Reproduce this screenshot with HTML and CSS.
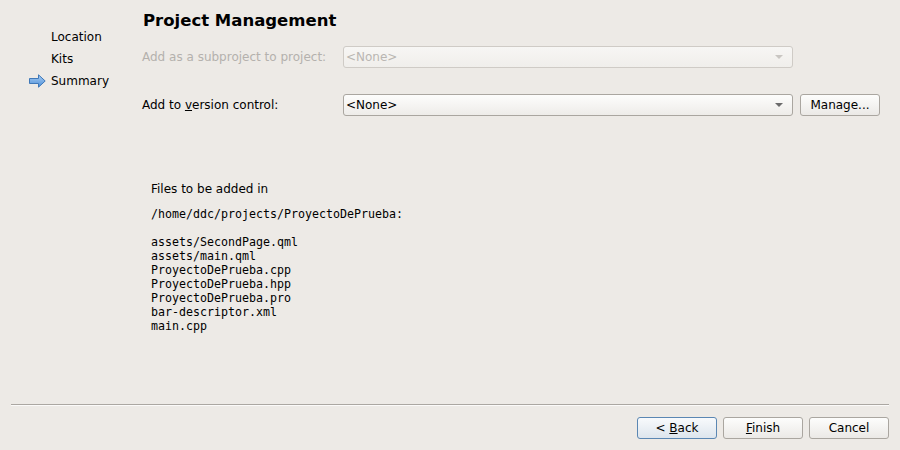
FILE: index.html
```html
<!DOCTYPE html>
<html>
<head>
<meta charset="utf-8">
<link rel="stylesheet" href="styles.css">
</head>
<body>
<div class="wizard">
  <div class="content">
    <ul class="steps">
      <li class="step"><span class="slot"></span>Location</li>
      <li class="step"><span class="slot"></span>Kits</li>
      <li class="step current"><span class="slot"><svg width="17" height="14" viewBox="0 0 17 14"><defs><linearGradient id="ag" x1="0" y1="0" x2="0" y2="1"><stop offset="0" stop-color="#a9cdf3"/><stop offset="1" stop-color="#4d8fd8"/></linearGradient></defs><path d="M0.5 4.5 H9.5 V0.8 L16.2 7 L9.5 13.2 V9.5 H0.5 Z" fill="url(#ag)" stroke="#3f78b8" stroke-width="1" stroke-linejoin="round"/></svg></span>Summary</li>
    </ul>
    <div class="main">
      <h1 class="title">Project Management</h1>
      <div class="form">
        <label class="label disabled">Add as a subproject to project:</label>
        <div class="combo disabled"><span>&lt;None&gt;</span><span class="caret"></span></div>
        <span></span>
        <label class="label row2">Add to <u>v</u>ersion control:</label>
        <div class="combo row2"><span>&lt;None&gt;</span><span class="caret"></span></div>
        <button class="btn row2">Manage...</button>
      </div>
      <div class="files">
        <p class="files-head">Files to be added in</p>
        <pre class="files-list">/home/ddc/projects/ProyectoDePrueba:

assets/SecondPage.qml
assets/main.qml
ProyectoDePrueba.cpp
ProyectoDePrueba.hpp
ProyectoDePrueba.pro
bar-descriptor.xml
main.cpp</pre>
      </div>
    </div>
  </div>
  <div class="footer">
    <div class="separator"></div>
    <div class="buttons">
      <button class="btn default">&lt; <u>B</u>ack</button>
      <button class="btn"><u>F</u>inish</button>
      <button class="btn">Cancel</button>
    </div>
  </div>
</div>
</body>
</html>
```

FILE: styles.css
```css
html, body {
  margin: 0;
  padding: 0;
}
body {
  width: 900px;
  height: 450px;
  overflow: hidden;
  background: #edeae6;
  font-family: "DejaVu Sans", sans-serif;
  font-size: 12px;
  color: #000;
}
.wizard {
  display: flex;
  flex-direction: column;
  height: 450px;
}
.content {
  flex: 1;
  display: flex;
}
.steps {
  list-style: none;
  margin: 0;
  padding: 26px 0 0 29px;
  width: 113px;
}
.step {
  display: flex;
  align-items: center;
  height: 22px;
}
.slot {
  width: 22px;
  height: 22px;
  display: flex;
  align-items: center;
}
.slot svg {
  display: block;
}
.main {
  flex: 1;
  padding-top: 11px;
}
.title {
  margin: 0;
  font-size: 16.5px;
  font-weight: bold;
  line-height: 20px;
  padding-left: 1px;
}
.form {
  display: grid;
  grid-template-columns: 194px 450px 80px;
  column-gap: 7px;
  row-gap: 26px;
  margin-top: 15px;
  align-items: center;
}
.label {
  line-height: 22px;
}
.label.disabled {
  color: #b4b1ad;
}
.combo {
  height: 22px;
  box-sizing: border-box;
  border: 1px solid #aaa6a0;
  border-radius: 3px;
  background: linear-gradient(#fdfdfc, #eeece9);
  display: flex;
  align-items: center;
  justify-content: space-between;
  padding: 0 9px 0 2px;
}
.combo.disabled {
  border-color: #cfcbc6;
  background: linear-gradient(#f7f6f4, #f0eeeb);
  color: #b9b6b2;
}
.caret {
  width: 0;
  height: 0;
  border-left: 4px solid transparent;
  border-right: 4px solid transparent;
  border-top: 4px solid #6b6b6b;
}
.combo.disabled .caret {
  border-top-color: #c9c6c2;
}
.btn {
  height: 22px;
  width: 80px;
  box-sizing: border-box;
  border: 1px solid #aaa6a0;
  border-radius: 3px;
  background: linear-gradient(#fdfdfc, #ebe9e6);
  font-family: "DejaVu Sans", sans-serif;
  font-size: 12px;
  color: #000;
  padding: 0;
  margin: 0;
}
.btn.default {
  border-color: #5b87b3;
  background: linear-gradient(#f8fafc, #dde5ed);
}
.files {
  padding-left: 9px;
  margin-top: 65px;
}
.files-head {
  margin: 0;
  line-height: 16px;
}
.files-list {
  margin: 10px 0 0 0;
  font-family: "DejaVu Sans Mono", monospace;
  font-size: 11.63px;
  line-height: 14px;
}
.footer {
  padding: 0 11px 11px 11px;
}
.separator {
  height: 1px;
  background: #aba7a2;
  border-bottom: 1px solid #fbfaf9;
}
.buttons {
  display: flex;
  justify-content: flex-end;
  gap: 6px;
  margin-top: 11px;
}
```
